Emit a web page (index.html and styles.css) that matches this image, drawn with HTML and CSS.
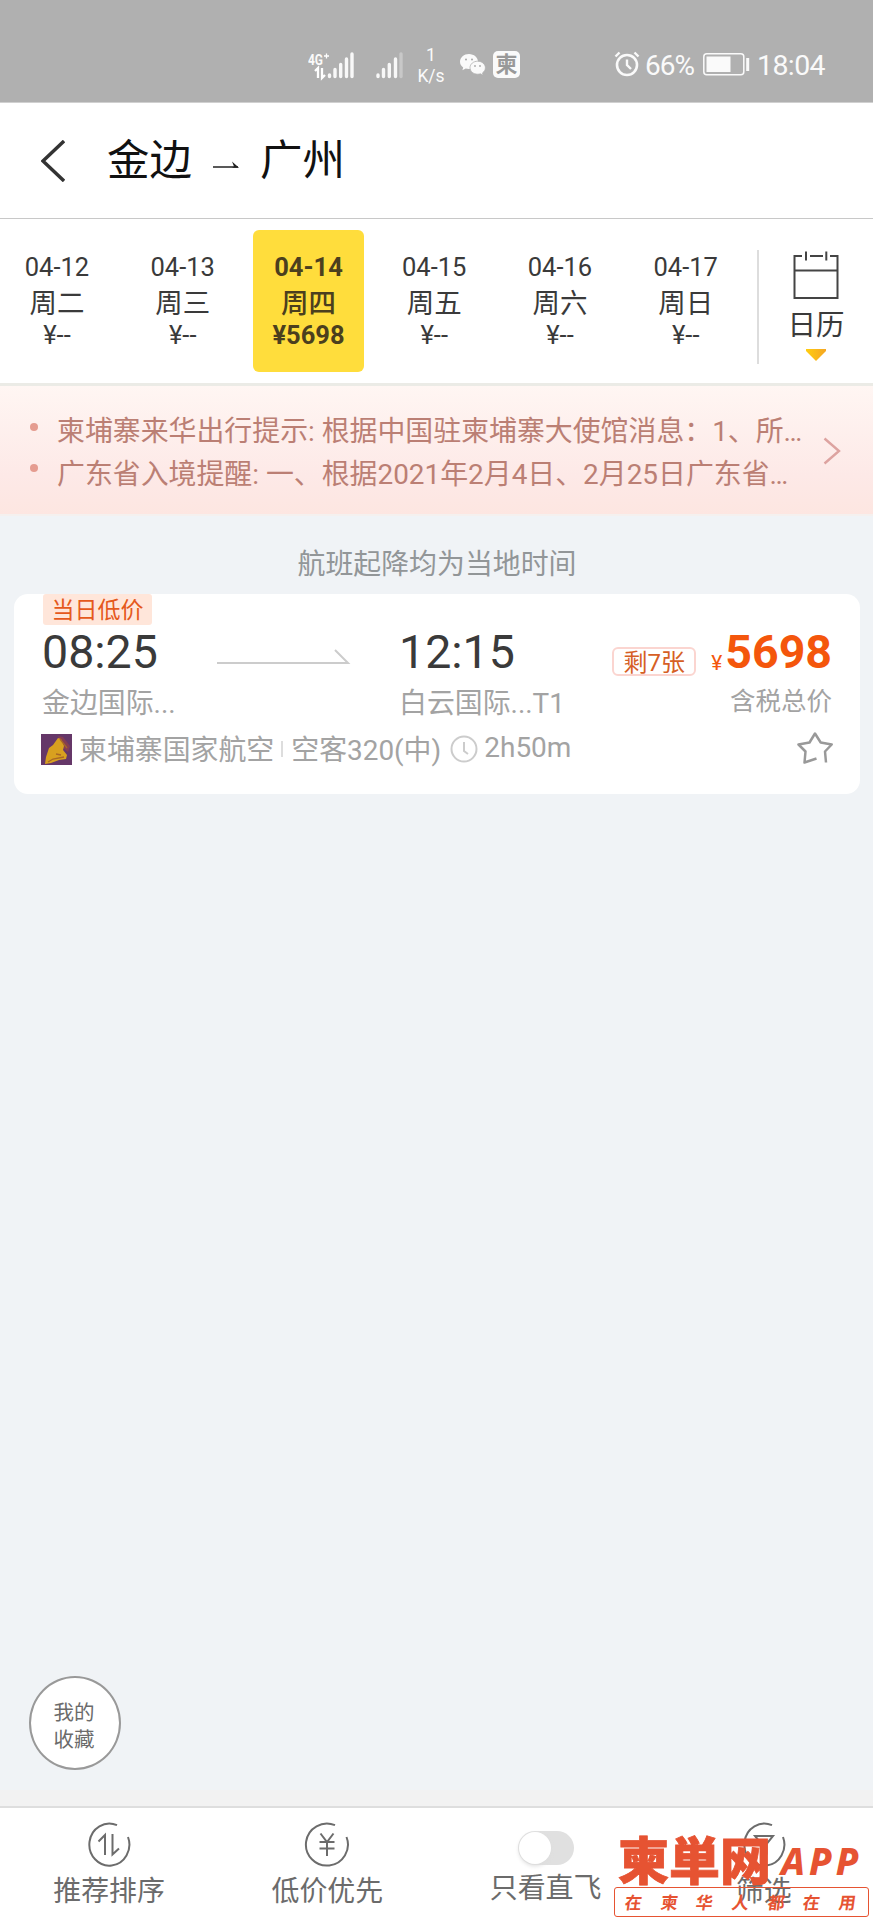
FILE: index.html
```
<!DOCTYPE html>
<html lang="zh-CN">
<head>
<meta charset="utf-8">
<title>金边 - 广州</title>
<link rel="stylesheet" href="styles.css">
</head>
<body>
<div class="app">
  <div class="status">
    <svg class="status-signal" viewBox="0 0 100 36" width="100" height="36">
      <text class="net-label" x="0" y="14" textLength="15" lengthAdjust="spacingAndGlyphs">4G</text>
      <path d="M16 5h5M18.500 2.500v5" stroke="#fff" stroke-width="1.300"/>
      <path d="M7 20l3-3v10M14 17v10l3-3" fill="none" stroke="#fff" stroke-width="2.300"/>
      <g stroke="#f8f8f8" stroke-width="3.400" stroke-linecap="round">
        <path d="M21.500 24v1.500M27 18.500v7M32.700 13.500v12M38.500 8v17.500M44 3v22.500"/>
        <path d="M70 24v1.500M75.500 18.500v7M81.300 13.500v12M87.500 8v17.500"/>
        <path d="M93 3v22.500" stroke="#c8c8c8"/>
      </g>
    </svg>
    <div class="speed"><span>1</span><span>K/s</span></div>
    <svg class="wechat" viewBox="0 0 26 22" width="26" height="22">
      <path d="M9 0C4 0 0 3.500 0 7.700c0 2.400 1.200 4.400 3.200 5.700l-.8 2.800 3.300-1.700c1 .3 2.100.5 3.300.5 5 0 9-3.200 9-7.300S14 0 9 0z" fill="#fafafa"/>
      <path d="M17.700 7.200c-4.300 0-7.700 2.900-7.700 6.500s3.400 6.500 7.700 6.500c1 0 1.900-.1 2.700-.4l2.800 1.500-.7-2.400c1.700-1.200 2.900-3 2.900-5.100 0-3.700-3.400-6.600-7.700-6.600z" fill="#fafafa" stroke="#b0b0b0" stroke-width=".8"/>
      <g fill="#a8a8a8"><circle cx="6" cy="5.500" r="1"/><circle cx="12" cy="5.500" r="1"/><circle cx="15" cy="12" r=".9"/><circle cx="20" cy="12" r=".9"/></g>
    </svg>
    <span class="app-badge">柬</span>
    <svg class="alarm" viewBox="0 0 26 26" width="26" height="26">
      <circle cx="13" cy="14" r="10" fill="none" stroke="#fafafa" stroke-width="2.600"/>
      <path d="M13 8.500v5.500l4 4M1.500 5.500l4-4M24.500 5.500l-4-4" fill="none" stroke="#fafafa" stroke-width="2.400"/>
    </svg>
    <span class="battery-text">66%</span>
    <svg class="battery" viewBox="0 0 47 23" width="47" height="23">
      <rect x=".8" y=".8" width="40" height="21" rx="3" fill="none" stroke="#fafafa" stroke-width="1.500"/>
      <rect x="3.500" y="3.500" width="24" height="15.500" fill="#fafafa"/>
      <path d="M44.700 5v13" stroke="#fafafa" stroke-width="3"/>
    </svg>
    <span class="clock">18:04</span>
  </div>

  <header class="header">
    <svg class="back" viewBox="0 0 24 42" width="24" height="42"><path d="M23 1L2 21l21 20" fill="none" stroke="#333" stroke-width="3.400"/></svg>
    <span class="city">金边</span>
    <svg class="route-arrow" viewBox="0 0 27 10" width="27" height="10"><path d="M0 7h25" stroke="#222" stroke-width="1.500"/><path d="M19 1.500l7 6.200h-7l2-1.200z" fill="#222"/></svg>
    <span class="city">广州</span>
  </header>

  <nav class="dates">
    <div class="day"><span>04-12</span><span class="week">周二</span><span>¥--</span></div>
    <div class="day"><span>04-13</span><span class="week">周三</span><span>¥--</span></div>
    <div class="day active"><span>04-14</span><span class="week">周四</span><span>¥5698</span></div>
    <div class="day"><span>04-15</span><span class="week">周五</span><span>¥--</span></div>
    <div class="day"><span>04-16</span><span class="week">周六</span><span>¥--</span></div>
    <div class="day"><span>04-17</span><span class="week">周日</span><span>¥--</span></div>
    <div class="calendar">
      <svg viewBox="0 0 46 49" width="46" height="49"><path d="M9 5H1.500v42h43V5H37M17 5h13M1.500 19.500h43M13 .500v9M33.300 .500v9" fill="none" stroke="#444" stroke-width="2"/></svg>
      <span class="calendar-label">日历</span>
      <svg viewBox="0 0 20 12" width="20" height="12"><defs><linearGradient id="gold"><stop stop-color="#ffcd10"/><stop offset="1" stop-color="#f5a623"/></linearGradient></defs><path d="M0 0h20v2l-10 10L0 2z" fill="url(#gold)"/></svg>
    </div>
  </nav>

  <section class="notice">
    <ul class="notice-list">
      <li>柬埔寨来华出行提示: 根据中国驻柬埔寨大使馆消息：1、所…</li>
      <li>广东省入境提醒: 一、根据2021年2月4日、2月25日广东省…</li>
    </ul>
    <svg class="more" viewBox="0 0 18 28" width="18" height="28"><path d="M1.500 1.500L16 14 1.500 26.500" fill="none" stroke="#dda3a0" stroke-width="2.400"/></svg>
  </section>

  <main class="results">
    <p class="hint">航班起降均为当地时间</p>
    <article class="card">
      <span class="tag">当日低价</span>
      <div class="flight">
        <div class="stop depart"><span class="time">08:25</span><span class="airport">金边国际...</span></div>
        <svg class="path" viewBox="0 0 134 16" width="134" height="16"><path d="M0 14h131L118 1" fill="none" stroke="#ccc" stroke-width="2"/></svg>
        <div class="stop"><span class="time">12:15</span><span class="airport">白云国际...T1</span></div>
        <div class="fare">
          <div class="price-row"><span class="left">剩7张</span><span class="yen">¥</span><span class="price">5698</span></div>
          <span class="tax">含税总价</span>
        </div>
      </div>
      <div class="details">
        <svg class="airline" viewBox="0 0 31 31" width="31" height="31"><rect width="31" height="31" fill="#653768"/><path d="M17 2l5 1 7 9-2 6-5-4z" fill="#853e52"/><path d="M17 4l3 1 3 7-1 4 4 5-1 4-7 1-8 3-6 1 1-7 3-9 4-3z" fill="#d8a01f"/><path d="M19 5l7 9M7 28l5-3 11-2M15 20l5 1" fill="none" stroke="#a86726" stroke-width="1.300"/></svg>
        <span class="carrier">柬埔寨国家航空</span>
        <span class="sep"></span>
        <span>空客320(中)</span>
        <svg class="duration-icon" viewBox="0 0 28 28" width="28" height="28"><circle cx="14" cy="14" r="12.500" fill="none" stroke="#ccc" stroke-width="2"/><path d="M14 7v9l4 3" fill="none" stroke="#ccc" stroke-width="2"/></svg>
        <span class="duration">2h50m</span>
        <svg class="star" viewBox="0 0 36 32" width="36" height="32"><path d="M19.500 26.500L7.500 30.500l1-11L1.500 12.500l11-2L18 1.500l5.700 9 11 2-6.700 7 1 11" fill="none" stroke="#999" stroke-width="2.500" stroke-linejoin="round"/></svg>
      </div>
    </article>
    <button class="favorite">我的<br>收藏</button>
  </main>

  <footer class="toolbar">
    <div class="tool">
      <svg viewBox="0 0 46 46" width="46" height="46"><g fill="none" stroke="#6c6c6c" stroke-width="2"><path d="M31 4.200A20 21 0 1 0 42 16"/><path d="M12.500 20.500l6.500-6.500v20M26.500 13v20.500l6.500-6"/></g></svg>
      <span>推荐排序</span>
    </div>
    <div class="tool">
      <svg viewBox="0 0 46 46" width="46" height="46"><g fill="none" stroke="#6c6c6c" stroke-width="2"><path d="M31 4.200A21 21 0 1 0 42.500 16"/><path d="M16.500 12.500L23 21l6.500-8.500M23 21v14M15.500 21h15M15.500 27.500h15"/></g></svg>
      <span>低价优先</span>
    </div>
    <div class="tool direct">
      <span class="switch"></span>
      <span>只看直飞</span>
    </div>
    <div class="tool">
      <svg viewBox="0 0 46 46" width="46" height="46"><g fill="none" stroke="#6c6c6c" stroke-width="2"><path d="M31 4.200A20 21 0 1 0 42 16"/><path d="M14 15h18l-6.500 8v9l-5-3v-6z"/></g></svg>
      <span>筛选</span>
    </div>
  </footer>

  <div class="watermark">
    <div class="mark-top"><span class="mark-name">柬単网</span><span class="mark-app">APP</span></div>
    <div class="mark-line"><span>在</span><span>柬</span><span>华</span><span>人</span><span>都</span><span>在</span><span>用</span></div>
  </div>
</div>
</body>
</html>
```

FILE: styles.css
```
* { box-sizing: border-box; }
body {
  margin: 0;
  font-family: Roboto, "Noto Sans CJK SC", sans-serif;
  color: #3a3a3a;
}
svg { display: block; flex: none; }
.app {
  position: relative;
  width: 873px;
  height: 1920px;
  overflow: hidden;
  display: flex;
  flex-direction: column;
  background: #f0f3f6;
  white-space: nowrap;
}

/* Status bar */
.status {
  height: 102px;
  flex: none;
  display: flex;
  align-items: flex-start;
  background: #b0b0b0;
  color: #fafafa;
  padding: 1px 0 0 308px;
}
.status-signal { margin-top: 50px; }
.net-label { font: 700 14px Roboto, sans-serif; fill: #fafafa; }
.speed {
  width: 28px;
  margin: 44px 0 0 9px;
  display: flex;
  flex-direction: column;
  align-items: center;
  font-size: 17.500px;
  line-height: 21px;
}
.wechat { margin: 53px 0 0 15px; }
.app-badge {
  width: 27px;
  height: 27px;
  margin: 50px 0 0 7px;
  border-radius: 5px;
  background: #fafafa;
  color: #999;
  font-size: 22px;
  font-weight: 700;
  line-height: 27px;
  text-align: center;
}
.alarm { margin: 50px 0 0 94px; }
.battery-text { margin: 48px 0 0 5px; font-size: 28px; line-height: 34px; width: 53px; letter-spacing: -1px; }
.battery { margin: 52px 0 0 5px; }
.clock { margin: 48px 0 0 7px; font-size: 28.500px; line-height: 34px; letter-spacing: -.6px; }

/* Header */
.header {
  height: 117px;
  flex: none;
  display: flex;
  align-items: center;
  padding: 0 0 2px 41px;
  background: #fff;
  border-top: 1px solid #d0d0d0;
  border-bottom: 1px solid #c8c8c8;
}
.back { margin-top: 2px; }
.city { font-size: 42.500px; line-height: 60px; color: #111; padding-top: 3px; }
.back + .city { margin-left: 42px; }
.route-arrow { margin: 11px 20px 0 21px; }

/* Date strip */
.dates {
  height: 167px;
  flex: none;
  display: flex;
  gap: 14.800px;
  padding: 11px 0 0 1.500px;
  background: #fff;
  border-bottom: 3px solid #ebebe6;
}
.day {
  width: 111px;
  height: 142px;
  padding-top: 21px;
  border-radius: 6px;
  display: flex;
  flex-direction: column;
  align-items: center;
  font-size: 25.500px;
  line-height: 33.500px;
}
.week { font-size: 27.500px; line-height: 34px; position: relative; top: 2px; }
.active { background: #ffdd3c; color: #4b3f1e; font-weight: 700; }
.active .week { font-weight: 500; }
.calendar {
  height: 114px;
  margin: 20px 0 0 1px;
  width: 116px;
  border-left: 2px solid #ddd;
  display: flex;
  flex-direction: column;
  align-items: center;
  padding-top: 1px;
}
.calendar-label { font-size: 28.500px; line-height: 42px; margin: 5px 0 2px; }

/* Notice */
.notice {
  height: 130px;
  flex: none;
  display: flex;
  padding: 25px 32px 0 26px;
  background: linear-gradient(#fff6f3, #fde9e7 70%, #fde6e1);
  border-bottom: 2px solid #f5f0ee;
}
.notice-list {
  list-style: none;
  margin: 0;
  padding: 0;
  flex: 1;
  font-size: 27.900px;
  line-height: 42.500px;
  color: #bb7f74;
}
.notice-list li { display: flex; }
.notice-list li::before {
  content: "";
  width: 8px;
  height: 8px;
  margin: 12px 19px 0 4px;
  border-radius: 50%;
  background: #e59c90;
  flex: none;
}
.notice-list li + li::before { margin-top: 10px; }
.more { margin-top: 26px; }

/* Results */
.results {
  flex: 1;
  display: flex;
  flex-direction: column;
  padding: 28px 13px 36px 14px;
  box-shadow: inset 0 -16px #f2f2f2;
}
.hint {
  margin: 0;
  text-align: center;
  font-size: 27.900px;
  line-height: 42px;
  color: #929698;
}
.card {
  height: 200px;
  margin-top: 8px;
  padding-left: 28px;
  padding-right: 28px;
  border-radius: 14px;
  background: #fff;
  display: flex;
  flex-direction: column;
  align-items: stretch;
}
.tag {
  align-self: flex-start;
  margin-left: 1px;
  width: 109px;
  height: 31px;
  border-radius: 3px;
  background: #ffe6da;
  color: #e5591c;
  font-size: 23px;
  line-height: 33px;
  text-align: center;
}
.flight { display: flex; height: 100px; }
.stop { display: flex; flex-direction: column; }
.depart { width: 175px; }
.time { font-size: 46.500px; line-height: 54px; }
.airport { font-size: 27.900px; line-height: 42px; color: #a3a3a3; margin-top: 4px; }
.path { margin: 24px 48px 0 0; }
.fare { margin-left: auto; display: flex; flex-direction: column; align-items: flex-end; }
.price-row { display: flex; height: 54px; }
.left {
  width: 84px;
  height: 29px;
  margin: 22px 15px 0 0;
  border: 2px solid #fbd5d0;
  border-radius: 6px;
  color: #d65f25;
  font-size: 24px;
  line-height: 28px;
  text-align: center;
}
.yen { font-size: 21px; line-height: 24px; color: #f4560c; margin: 26px 3px 0 0; }
.price { font-size: 46.500px; line-height: 54px; font-weight: 700; color: #f4560c; }
.tax { font-size: 25.500px; line-height: 40px; color: #a3a3a3; margin-top: 2px; }
.details {
  height: 50px;
  display: flex;
  align-items: center;
  font-size: 27.900px;
  line-height: 42px;
  color: #a3a3a3;
  padding-top: 2px;
}
.airline { margin: -4px 0 0 -1px; }
.carrier { margin-left: 7px; }
.sep { width: 2px; height: 16px; margin: 0 8px 5px 7px; background: #ddd; }
.duration-icon { margin: -4px 0 0 9px; }
.duration { margin: -6px 0 0 6px; font-size: 28px; }
.star { margin: -7px -1px 0 auto; }
.favorite {
  width: 92px;
  height: 94px;
  margin: auto 0 0 15px;
  padding: 8px 2px 0 0;
  border: 2px solid #999;
  border-radius: 50%;
  background: #fff;
  color: #6b6b6b;
  font-family: inherit;
  font-size: 20.500px;
  line-height: 27px;
}

/* Bottom toolbar */
.toolbar {
  height: 114px;
  flex: none;
  display: grid;
  grid-template-columns: repeat(4, 1fr);
  border-top: 2px solid #dedede;
  background: #fff;
}
.tool {
  display: flex;
  flex-direction: column;
  align-items: center;
  padding-top: 13px;
  font-size: 27.900px;
  line-height: 50px;
  color: #6b6b6b;
}
.direct { padding-top: 23px; }
.switch {
  width: 56px;
  height: 34px;
  margin-bottom: -1px;
  border-radius: 17px;
  background: #e0e0e0;
  padding: 1px;
}
.switch::before {
  content: "";
  display: block;
  width: 32px;
  height: 32px;
  border-radius: 50%;
  background: #fff;
  box-shadow: 0 2px 4px #ddd;
}

/* Brand mark laid over the toolbar */
.watermark {
  position: absolute;
  left: 614px;
  top: 1830px;
  width: 255px;
  color: #e65332;
}
.mark-top { display: flex; height: 57px; }
.mark-name {
  width: 167px;
  padding-left: 4px;
  font-family: "Noto Sans CJK JP", sans-serif;
  font-size: 51px;
  font-weight: 900;
  line-height: 56px;
  -webkit-text-stroke: .800px #e65332;
}
.mark-app {
  font-family: "Noto Sans", sans-serif;
  font-size: 37px;
  font-weight: 800;
  font-style: italic;
  line-height: 61px;
  letter-spacing: 4px;
}
.mark-line {
  height: 30px;
  border: 1.500px solid #e65332;
  border-radius: 3px;
  display: flex;
  justify-content: space-between;
  padding: 0 12px 0 10px;
  font-size: 17px;
  font-weight: 700;
  line-height: 30px;
}
.mark-line span { transform: skewX(-8deg); }
```
